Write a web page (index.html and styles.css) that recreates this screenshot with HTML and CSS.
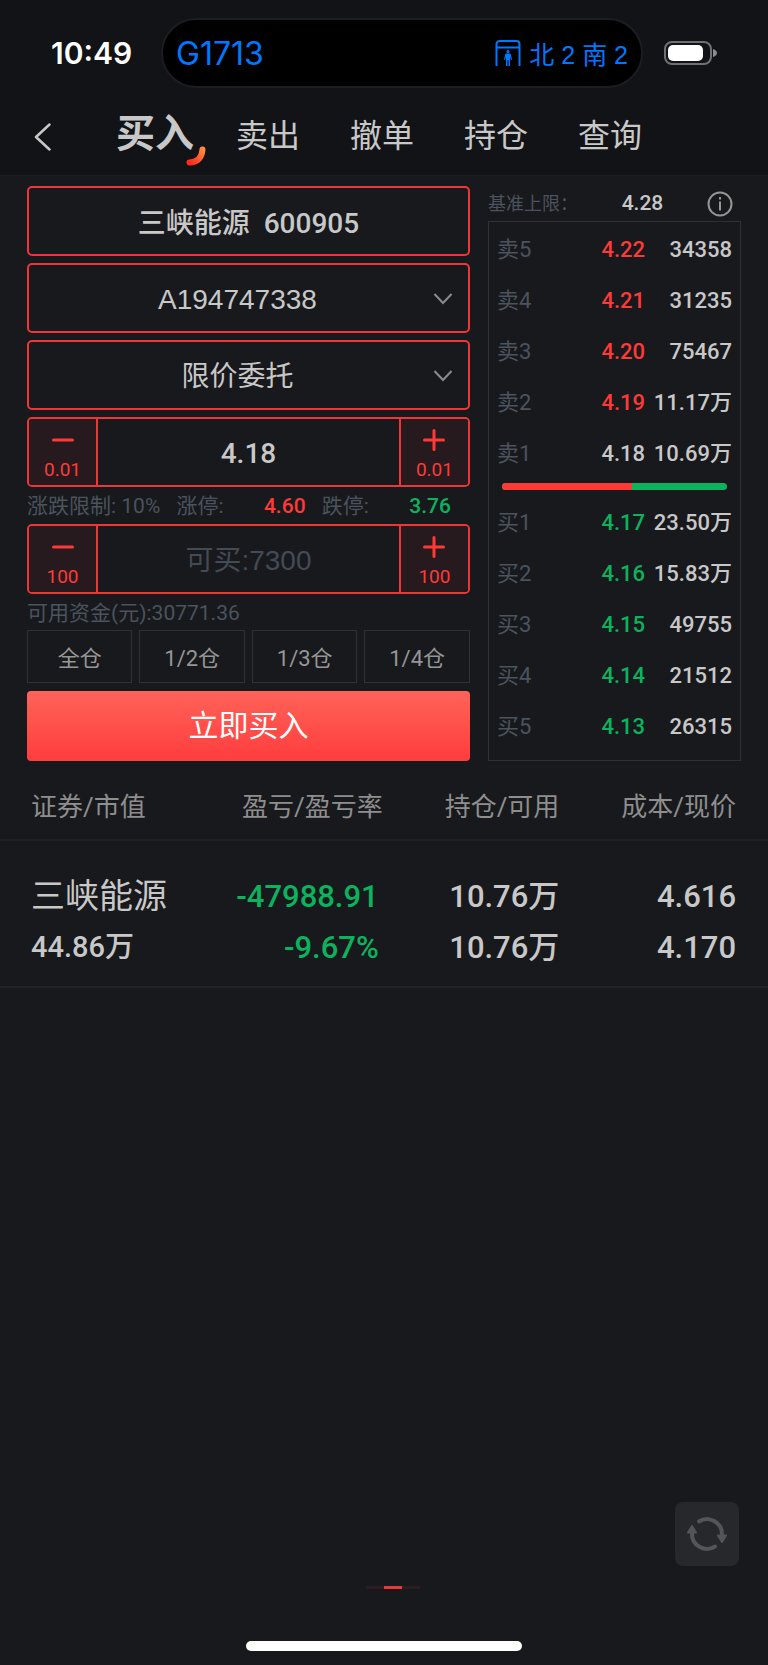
FILE: index.html
```html
<!DOCTYPE html>
<html lang="zh-CN">
<head>
    <meta charset="utf-8">
    <meta name="viewport" content="width=device-width, initial-scale=1">
    <title>买入</title>
    <link rel="stylesheet" href="styles.css">
</head>
<body>
    <header class="top">
        <div class="status-bar">
            <time class="clock">10:49</time>
            <div class="island">
                <span class="train">G1713</span>
                <span class="gate">
                    <svg width="26" height="26" viewBox="0 0 26 26" fill="none" stroke="currentColor" stroke-width="2" aria-hidden="true">
                        <path d="M1.500 26V4a3 3 0 0 1 3-3h17a3 3 0 0 1 3 3v22M1.500 7.500h23"/>
                        <circle cx="13" cy="11.500" r="1.500" fill="currentColor" stroke="none"/>
                        <path d="M10.500 13.500h5l1.500 6-1 .5-1-3V26h-1.500v-6h-1v6H11v-9L10 20l-1-.5z" fill="currentColor" stroke="none"/>
                    </svg>
                    <span>北 2 南 2</span>
                </span>
            </div>
            <svg class="battery" width="53" height="24" viewBox="0 0 53 24" aria-label="电量">
                <rect x="1" y="1" width="46" height="22" rx="7" fill="none" stroke="#6f7073" stroke-width="2"/>
                <rect x="4" y="4" width="35" height="16" rx="5" fill="#fff"/>
                <path d="M49 8q4 1.500 4 4t-4 4z" fill="#8a8b8d"/>
            </svg>
        </div>
        <nav class="tabs">
            <a class="back" href="#" aria-label="返回">
                <svg width="18" height="28" viewBox="0 0 18 28" fill="none" stroke="currentColor" stroke-width="2.500" stroke-linecap="round" stroke-linejoin="round"><path d="M15.500 1.500 2 14l13.500 12.500"/></svg>
            </a>
            <a class="tab active" href="#">买入
                <svg class="swoosh" width="20" height="20" viewBox="0 0 20 20" fill="none" aria-hidden="true">
                    <defs>
                        <linearGradient id="flame" x1="1" y1="0" x2="0" y2="1">
                            <stop offset="0" stop-color="#ff8a3c"/>
                            <stop offset="1" stop-color="#ff2a1c"/>
                        </linearGradient>
                    </defs>
                    <path d="M16.500 3.500Q15.500 16 3.500 16.500" stroke="url(#flame)" stroke-width="6" stroke-linecap="round"/>
                </svg>
            </a>
            <a class="tab" href="#">卖出</a>
            <a class="tab" href="#">撤单</a>
            <a class="tab" href="#">持仓</a>
            <a class="tab" href="#">查询</a>
        </nav>
    </header>

    <main>
        <div class="trade">
            <form class="order" onsubmit="return false">
                <input class="field stock" type="text" value="三峡能源  600905" aria-label="证券">
                <div class="select-wrap">
                    <select class="field" aria-label="股东账号"><option>A194747338</option></select>
                    <svg class="arrow" width="20" height="12" viewBox="0 0 20 12" fill="none" stroke="currentColor" stroke-width="2" aria-hidden="true"><path d="m1.500 1 8.500 9 8.500-9"/></svg>
                </div>
                <div class="select-wrap">
                    <select class="field" aria-label="委托方式"><option>限价委托</option></select>
                    <svg class="arrow" width="20" height="12" viewBox="0 0 20 12" fill="none" stroke="currentColor" stroke-width="2" aria-hidden="true"><path d="m1.500 1 8.500 9 8.500-9"/></svg>
                </div>
                <div class="stepper">
                    <button type="button" aria-label="减0.01">
                        <svg width="24" height="24" viewBox="0 0 24 24" stroke="currentColor" stroke-width="3" stroke-linecap="round"><path d="M2.500 12h19"/></svg>
                        <span>0.01</span>
                    </button>
                    <input class="price" type="text" value="4.18" aria-label="价格">
                    <button type="button" aria-label="加0.01">
                        <svg width="24" height="24" viewBox="0 0 24 24" stroke="currentColor" stroke-width="3" stroke-linecap="round"><path d="M2.500 12h19M12 2.500v19"/></svg>
                        <span>0.01</span>
                    </button>
                </div>
                <div class="limits">
                    <span>涨跌限制: 10%</span>
                    <span>涨停:</span>
                    <span class="limit-price red">4.60</span>
                    <span>跌停:</span>
                    <span class="limit-price green">3.76</span>
                </div>
                <div class="stepper">
                    <button type="button" aria-label="减100">
                        <svg width="24" height="24" viewBox="0 0 24 24" stroke="currentColor" stroke-width="3" stroke-linecap="round"><path d="M2.500 12h19"/></svg>
                        <span>100</span>
                    </button>
                    <input type="text" placeholder="可买:7300" aria-label="数量">
                    <button type="button" aria-label="加100">
                        <svg width="24" height="24" viewBox="0 0 24 24" stroke="currentColor" stroke-width="3" stroke-linecap="round"><path d="M2.500 12h19M12 2.500v19"/></svg>
                        <span>100</span>
                    </button>
                </div>
                <div class="funds">可用资金(元):30771.36</div>
                <div class="ratios">
                    <button type="button">全仓</button>
                    <button type="button">1/2仓</button>
                    <button type="button">1/3仓</button>
                    <button type="button">1/4仓</button>
                </div>
                <button class="buy" type="submit">立即买入</button>
            </form>

            <section class="quotes">
                <div class="base">
                    <span class="base-label">基准上限：</span>
                    <span class="base-price">4.28</span>
                    <button class="info" type="button" aria-label="说明">
                        <svg width="26" height="26" viewBox="0 0 26 26" fill="none" stroke="currentColor" stroke-width="2"><circle cx="13" cy="13" r="11.500"/><path d="M13 10.500v9M13 6v2.500"/></svg>
                    </button>
                </div>
                <div class="book">
                    <table class="levels">
                        <tr><th>卖5</th><td class="red">4.22</td><td>34358</td></tr>
                        <tr><th>卖4</th><td class="red">4.21</td><td>31235</td></tr>
                        <tr><th>卖3</th><td class="red">4.20</td><td>75467</td></tr>
                        <tr><th>卖2</th><td class="red">4.19</td><td>11.17万</td></tr>
                        <tr><th>卖1</th><td>4.18</td><td>10.69万</td></tr>
                    </table>
                    <div class="balance"><div class="balance-sell" style="width: 58%"></div></div>
                    <table class="levels">
                        <tr><th>买1</th><td class="green">4.17</td><td>23.50万</td></tr>
                        <tr><th>买2</th><td class="green">4.16</td><td>15.83万</td></tr>
                        <tr><th>买3</th><td class="green">4.15</td><td>49755</td></tr>
                        <tr><th>买4</th><td class="green">4.14</td><td>21512</td></tr>
                        <tr><th>买5</th><td class="green">4.13</td><td>26315</td></tr>
                    </table>
                </div>
            </section>
        </div>

        <table class="holdings">
            <thead>
                <tr><th>证券/市值</th><th>盈亏/盈亏率</th><th>持仓/可用</th><th>成本/现价</th></tr>
            </thead>
            <tbody>
                <tr><td class="name">三峡能源</td><td class="green">-47988.91</td><td>10.76万</td><td>4.616</td></tr>
                <tr><td class="worth">44.86万</td><td class="green">-9.67%</td><td>10.76万</td><td>4.170</td></tr>
            </tbody>
        </table>
    </main>

    <button class="refresh" type="button" aria-label="刷新">
        <svg width="40" height="40" viewBox="0 0 40 40" fill="none" stroke="currentColor" stroke-width="4" stroke-linecap="round">
            <path d="M12 7.500A15 15 0 0 1 35 21M28 32.500A15 15 0 0 1 5 19"/>
            <path d="M31 21.500h8L35 28zM1 18.500h8L5 12z" fill="currentColor" stroke-width="2" stroke-linejoin="round"/>
        </svg>
    </button>

    <footer>
        <div class="pager"><div class="pager-dot"></div></div>
        <div class="home-bar"></div>
    </footer>
</body>
</html>
```

FILE: styles.css
```css
* {
    box-sizing: border-box;
}
body {
    margin: 0;
    min-height: 100vh;
    display: flex;
    flex-direction: column;
    background: #18191c;
    color: #c8c8c8;
    font-family: Roboto, "Noto Sans CJK SC", sans-serif;
    line-height: 1.2;
}
a {
    color: inherit;
    text-decoration: none;
}
button, input, select {
    font-family: inherit;
    line-height: inherit;
    color: inherit;
    margin: 0;
    padding: 0;
    border: none;
    background: none;
}
svg {
    display: block;
    flex: none;
}
.red {
    color: #fd3a38;
}
.green {
    color: #0cb25e;
}

/* status bar and tabs */
.top {
    background: #121316;
    padding-top: 18px;
    border-bottom: 1px solid #1b1c1f;
}
.status-bar {
    display: flex;
    align-items: center;
    padding: 0 51px;
}
.clock {
    width: 110px;
    color: #fff;
    font: 600 30px Inter, sans-serif;
}
.island {
    flex: 1;
    height: 70px;
    display: flex;
    align-items: center;
    justify-content: space-between;
    padding: 0 13px;
    border: 2px solid #1c1d20;
    border-radius: 35px;
    background: #000;
    color: #0077ff;
}
.train {
    font: 400 32px Inter, sans-serif;
}
.gate {
    display: flex;
    align-items: center;
    gap: 8px;
    font: 25px "Liberation Sans", "Noto Sans CJK SC", sans-serif;
}
.battery {
    margin-left: 21px;
}
.tabs {
    height: 87px;
    display: flex;
    align-items: center;
    padding: 10px 34px 0;
    font-size: 32px;
}
.back {
    width: 82px;
}
.tab {
    position: relative;
    margin-right: 50px;
}
.tab.active {
    margin-right: 42px;
    padding-bottom: 4px;
    font-size: 39px;
    font-weight: bold;
}
.swoosh {
    position: absolute;
    right: -12px;
    bottom: -4px;
}

/* order form */
.trade {
    display: grid;
    grid-template-columns: minmax(0, 7fr) minmax(0, 4fr);
    gap: 18px;
    padding: 10px 27px 0;
}
.field {
    display: block;
    width: 100%;
    height: 70px;
    margin-bottom: 7px;
    border: 2px solid #ee3636;
    border-radius: 5px;
    font-family: "Liberation Sans", "Noto Sans CJK SC", sans-serif;
    font-size: 28px;
    text-align: center;
    text-align-last: center;
}
.stock {
    font-family: Roboto, "Noto Sans CJK SC", sans-serif;
    font-weight: 500;
    white-space: pre;
}
.select-wrap {
    position: relative;
}
select.field {
    appearance: none;
    padding: 3px 22px 0 0;
}
.arrow {
    position: absolute;
    right: 17px;
    top: 30px;
    color: #8a8b8d;
}
.stepper {
    display: flex;
    height: 70px;
    border: 2px solid #ee3636;
    border-radius: 5px;
    overflow: hidden;
}
.stepper button {
    width: 67px;
    display: flex;
    flex-direction: column;
    align-items: center;
    justify-content: center;
    gap: 7px;
    padding-top: 4px;
    background: #271a1e;
    color: #fd3a38;
    font-size: 19px;
    line-height: 22px;
}
.stepper input {
    flex: 1;
    min-width: 0;
    padding-top: 3px;
    border: solid #ee3636;
    border-width: 0 2px;
    font-family: "Liberation Sans", "Noto Sans CJK SC", sans-serif;
    font-size: 28px;
    text-align: center;
}
.stepper .price {
    font-family: Roboto, sans-serif;
    font-weight: 500;
}
.stepper input::placeholder {
    color: #434b55;
}
.limits {
    height: 37px;
    display: flex;
    align-items: center;
    justify-content: space-between;
    padding: 3px 19px 0 0;
    color: #4a535e;
    font-size: 21px;
    white-space: nowrap;
}
.limit-price {
    width: 66px;
    text-align: right;
    font-weight: 500;
}
.funds {
    height: 36px;
    line-height: 38px;
    color: #4a535e;
    font-size: 21px;
}
.ratios {
    display: grid;
    grid-template-columns: repeat(4, 1fr);
    gap: 7px;
    margin-bottom: 8px;
}
.ratios button {
    height: 53px;
    padding-top: 5px;
    border: 1px solid #303134;
    color: #969696;
    font-size: 22px;
}
.buy {
    width: 100%;
    height: 70px;
    border-radius: 4px;
    background: linear-gradient(#ff6359, #ff3d3d);
    color: #fff;
    font-size: 30px;
}

/* order book */
.quotes {
    display: flex;
    flex-direction: column;
}
.base {
    height: 35px;
    display: flex;
    align-items: center;
    justify-content: space-between;
    padding-right: 8px;
}
.base-label {
    color: #4a535e;
    font-size: 18px;
}
.base-price {
    font-size: 21px;
    font-weight: 500;
}
.info {
    color: #969696;
}
.book {
    flex: 1;
    padding: 1px 8px;
    border: 1px solid #303134;
}
.levels {
    width: 100%;
    border-collapse: collapse;
    table-layout: fixed;
    font-size: 22px;
}
.levels th, .levels td {
    height: 51px;
    padding: 4px 0 0;
    font-weight: 500;
    text-align: right;
    white-space: nowrap;
}
.levels th {
    width: 28%;
    color: #4a535e;
    font-weight: 400;
    text-align: left;
}
.levels td:last-child {
    width: 37%;
}
.balance {
    height: 7px;
    margin: 5px 5px 6px;
    border-radius: 4px;
    background: #0cb25e;
    overflow: hidden;
}
.balance-sell {
    height: 100%;
    background: #fd3a38;
}

/* holdings */
.holdings {
    width: 100%;
    margin-top: 12px;
    border-collapse: collapse;
    table-layout: fixed;
    border-bottom: 2px solid #222326;
}
.holdings th, .holdings td {
    padding: 0 32px 0 0;
    text-align: right;
    white-space: nowrap;
}
.holdings th:first-child, .holdings td:first-child {
    width: 27%;
    padding-left: 31px;
    text-align: left;
}
.holdings th:nth-child(2), .holdings td:nth-child(2) {
    width: 27%;
}
.holdings th {
    height: 67px;
    padding-top: 3px;
    border-bottom: 2px solid #1e1f22;
    color: #8e8e8e;
    font-size: 26px;
    font-weight: 400;
}
.holdings td {
    height: 52px;
    font-size: 31px;
    font-weight: 500;
}
.holdings td.green {
    padding-right: 36px;
}
.holdings tbody tr:first-child td {
    height: 82px;
    padding-top: 30px;
}
.holdings tbody tr:last-child td {
    height: 65px;
    padding-bottom: 13px;
}
.holdings .name {
    font-size: 34px;
    font-weight: 400;
}
.holdings .worth {
    font-size: 29px;
}

.refresh {
    position: fixed;
    right: 29px;
    bottom: 99px;
    width: 64px;
    height: 64px;
    display: flex;
    align-items: center;
    justify-content: center;
    border-radius: 8px;
    background: #27282b;
    color: #545558;
}

footer {
    margin-top: auto;
    padding-bottom: 14px;
    display: flex;
    flex-direction: column;
    align-items: center;
}
.pager {
    width: 54px;
    height: 3px;
    margin: 0 0 52px 18px;
    background: #2b1d21;
}
.pager-dot {
    width: 18px;
    height: 3px;
    margin: 0 auto;
    background: #e83837;
}
.home-bar {
    width: 36%;
    height: 10px;
    border-radius: 5px;
    background: #fff;
}
```
